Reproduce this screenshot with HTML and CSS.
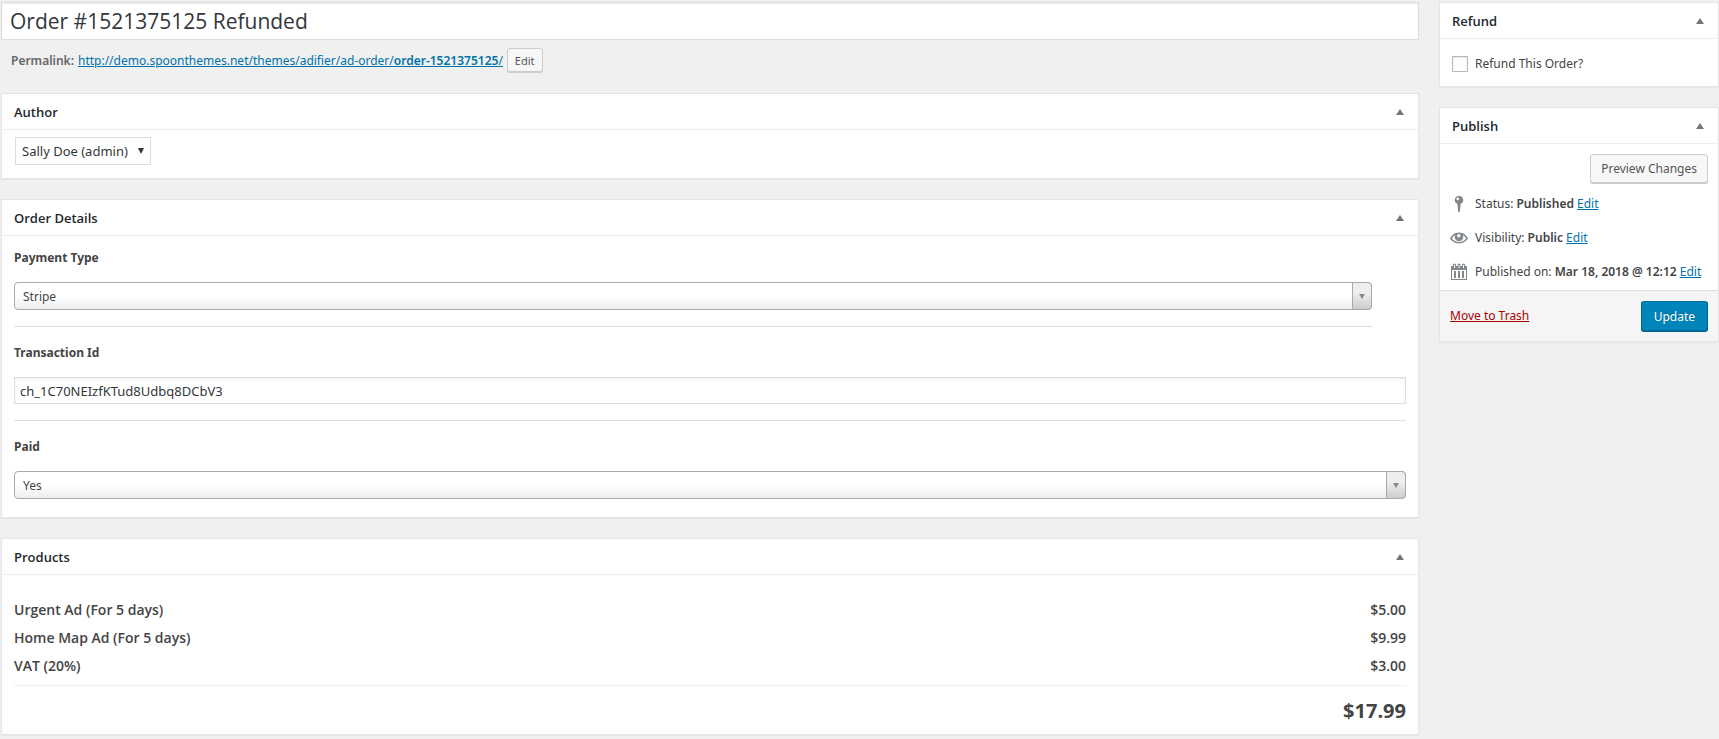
FILE: index.html
```html
<!DOCTYPE html>
<html lang="en">
<head>
    <meta charset="utf-8">
    <title>Edit Order</title>
    <link rel="stylesheet" href="styles.css">
</head>
<body>
    <form class="edit-order">
        <main class="main-column">
            <input type="text" class="order-title" aria-label="Order title" value="Order #1521375125 Refunded">
            <div class="permalink">
                <strong>Permalink:</strong>
                <a href="#">http://demo.spoonthemes.net/themes/adifier/ad-order/<b>order-1521375125</b>/</a>
                <button type="button" class="button button-small">Edit</button>
            </div>

            <!-- Author -->
            <section class="postbox">
                <header class="postbox-header">
                    <h2>Author</h2>
                    <button type="button" class="toggle" aria-label="Toggle Author"><svg viewBox="0 0 8 6"><path d="M4 0l4 6H0z"/></svg></button>
                </header>
                <div class="author-inside">
                    <div class="author-select">
                        <select aria-label="Author">
                            <option>Sally Doe (admin)</option>
                        </select>
                        <svg viewBox="0 0 6 6"><path d="M0 0h6L3 6z"/></svg>
                    </div>
                </div>
            </section>

            <!-- Order details -->
            <section class="postbox">
                <header class="postbox-header">
                    <h2>Order Details</h2>
                    <button type="button" class="toggle" aria-label="Toggle Order Details"><svg viewBox="0 0 8 6"><path d="M4 0l4 6H0z"/></svg></button>
                </header>
                <div class="details-inside">
                    <div class="field field-narrow">
                        <label for="payment-type">Payment Type</label>
                        <div class="chosen">
                            <select id="payment-type">
                                <option>Stripe</option>
                            </select>
                            <span class="chosen-arrow"><svg viewBox="0 0 6 5"><path d="M0 0h6L3 5z"/></svg></span>
                        </div>
                    </div>
                    <div class="field">
                        <label for="transaction-id">Transaction Id</label>
                        <input type="text" id="transaction-id" class="text-input" value="ch_1C70NEIzfKTud8Udbq8DCbV3">
                    </div>
                    <div class="field">
                        <label for="paid">Paid</label>
                        <div class="chosen">
                            <select id="paid">
                                <option>Yes</option>
                            </select>
                            <span class="chosen-arrow"><svg viewBox="0 0 6 5"><path d="M0 0h6L3 5z"/></svg></span>
                        </div>
                    </div>
                </div>
            </section>

            <!-- Products -->
            <section class="postbox">
                <header class="postbox-header">
                    <h2>Products</h2>
                    <button type="button" class="toggle" aria-label="Toggle Products"><svg viewBox="0 0 8 6"><path d="M4 0l4 6H0z"/></svg></button>
                </header>
                <div class="products-inside">
                    <table class="products">
                        <tbody>
                            <tr>
                                <td>Urgent Ad (For 5 days)</td>
                                <td class="price">$5.00</td>
                            </tr>
                            <tr>
                                <td>Home Map Ad (For 5 days)</td>
                                <td class="price">$9.99</td>
                            </tr>
                            <tr>
                                <td>VAT (20%)</td>
                                <td class="price">$3.00</td>
                            </tr>
                        </tbody>
                        <tfoot>
                            <tr>
                                <td colspan="2" class="price total">$17.99</td>
                            </tr>
                        </tfoot>
                    </table>
                </div>
            </section>
        </main>

        <aside class="side-column">
            <!-- Refund -->
            <section class="postbox">
                <header class="postbox-header">
                    <h2>Refund</h2>
                    <button type="button" class="toggle" aria-label="Toggle Refund"><svg viewBox="0 0 8 6"><path d="M4 0l4 6H0z"/></svg></button>
                </header>
                <div class="refund-inside">
                    <input type="checkbox" id="refund">
                    <label for="refund">Refund This Order?</label>
                </div>
            </section>

            <!-- Publish -->
            <section class="postbox">
                <header class="postbox-header">
                    <h2>Publish</h2>
                    <button type="button" class="toggle" aria-label="Toggle Publish"><svg viewBox="0 0 8 6"><path d="M4 0l4 6H0z"/></svg></button>
                </header>
                <div class="preview">
                    <button type="button" class="button">Preview Changes</button>
                </div>
                <ul class="publish-info">
                    <li>
                        <svg viewBox="0 0 18 18"><path fill-rule="evenodd" d="M9 1a4 4 0 0 1 1.700 7.700L9.800 17H8.200L7.300 8.700A4 4 0 0 1 9 1zM7.700 2.600a1.300 1.300 0 1 0 .1 2.600 1.300 1.300 0 0 0-.1-2.600z"/></svg>
                        <span>Status: <b>Published</b> <a href="#">Edit</a></span>
                    </li>
                    <li>
                        <svg viewBox="0 0 18 18"><path fill-rule="evenodd" d="M9 3.500c4.500 0 7.500 3 9 5.800-1.500 2.700-4.500 5.200-9 5.200S1.500 12 0 9.300c1.500-2.800 4.500-5.800 9-5.800zM1.800 9.300c1.500 2.200 4 3.700 7.200 3.700s5.700-1.500 7.200-3.700c-.9-1.500-2-2.600-3.400-3.400A4.300 4.300 0 1 1 5.200 5.900C3.800 6.700 2.700 7.800 1.800 9.300zM8.800 5a1.700 1.700 0 1 0 1.700 1.700A1.700 1.700 0 0 0 8.800 5z"/></svg>
                        <span>Visibility: <b>Public</b> <a href="#">Edit</a></span>
                    </li>
                    <li>
                        <svg viewBox="0 0 18 18"><path fill-rule="evenodd" d="M1 3h2V2a1.500 1.500 0 0 1 3 0v1h1.500V2a1.500 1.500 0 0 1 3 0v1H12V2a1.500 1.500 0 0 1 3 0v1h2v14H1zM4 2v3h1V2zM8.500 2v3h1V2zM13 2v3h1V2zM2 7v9h14V7zM4 8h2v7H4zM8 8h2v7H8zM12 8h2v7h-2z"/></svg>
                        <span>Published on: <b>Mar 18, 2018 @ 12:12</b> <a href="#">Edit</a></span>
                    </li>
                </ul>
                <footer class="publish-actions">
                    <a href="#" class="trash">Move to Trash</a>
                    <button type="submit" class="button button-primary">Update</button>
                </footer>
            </section>
        </aside>
    </form>
</body>
</html>
```
FILE: styles.css
```css
* {
    box-sizing: border-box;
}

body {
    margin: 0;
    background: #f0f0f0;
    color: #444;
    font: 12px/20px "Noto Sans", "Open Sans", sans-serif;
}

a {
    color: #0073aa;
}

b,
strong {
    font-weight: 600;
}

input,
select,
button {
    margin: 0;
    font-family: inherit;
    color: #32373c;
}

.edit-order {
    display: flex;
    align-items: flex-start;
    gap: 20px;
    padding: 2px 0 4px 1px;
}

.main-column {
    flex: 1;
    min-width: 0;
}

.side-column {
    width: 280px;
}

/* title and permalink */
.order-title {
    display: block;
    width: 100%;
    height: 38px;
    padding: 0 8px;
    border: 1px solid #ddd;
    background: #fff;
    box-shadow: inset 0 1px 2px rgba(0, 0, 0, 0.07);
    font-family: "Open Sans", sans-serif;
    font-size: 21px;
}

.permalink {
    display: flex;
    align-items: center;
    gap: 4px;
    margin: 8px 0 20px;
    padding: 0 10px;
    color: #666;
}

/* buttons */
.button {
    height: 29px;
    padding: 0 10px;
    border: 1px solid #ccc;
    border-radius: 3px;
    background: #f7f7f7;
    box-shadow: 0 1px 0 #ccc;
    color: #555;
    font-size: 12px;
}

.button-small {
    height: 24px;
    margin-bottom: 1px;
    padding: 0 7px;
    font-size: 11px;
}

.button-primary {
    height: 30px;
    padding: 0 12px;
    border-color: #0073aa #006799 #006799;
    background: #0085ba;
    box-shadow: 0 1px 0 #006799;
    color: #fff;
    text-shadow: 0 -1px 1px #006799;
}

/* boxes */
.postbox {
    margin-bottom: 20px;
    border: 1px solid #e5e5e5;
    background: #fff;
    box-shadow: 0 1px 1px rgba(0, 0, 0, 0.04);
}

.main-column .postbox:last-child {
    margin-bottom: 0;
}

.postbox-header {
    display: flex;
    align-items: center;
    justify-content: space-between;
    height: 36px;
    padding-left: 12px;
    border-bottom: 1px solid #eee;
}

.postbox-header h2 {
    margin: 0;
    color: #23282d;
    font-family: "Open Sans", sans-serif;
    font-size: 13px;
    font-weight: 600;
}

.toggle {
    display: flex;
    align-items: center;
    justify-content: center;
    width: 36px;
    height: 35px;
    padding: 0;
    border: 0;
    background: none;
}

.toggle svg {
    width: 8px;
    height: 6px;
    fill: #72777c;
}

/* author */
.author-inside {
    display: flex;
    padding: 7px 13px 13px;
}

.author-select,
.chosen {
    display: grid;
    align-items: center;
}

.author-select > *,
.chosen > * {
    grid-area: 1 / 1;
}

.author-select select {
    height: 28px;
    padding: 0 22px 0 6px;
    border: 1px solid #ddd;
    background: #fff;
    appearance: none;
    font-size: 13px;
}

.author-select svg {
    justify-self: end;
    width: 6px;
    height: 6px;
    margin-right: 7px;
    fill: #32373c;
    pointer-events: none;
}

/* order details */
.details-inside {
    padding: 0 12px 2px;
}

.field {
    padding: 16px 0;
    border-bottom: 1px solid #ddd;
}

.field:first-child {
    padding-top: 12px;
}

.field:last-child {
    border-bottom: 0;
}

.field-narrow {
    margin-right: 34px;
}

.field label {
    display: block;
    margin-bottom: 14px;
    font-weight: 700;
}

.text-input {
    display: block;
    width: 100%;
    height: 27px;
    padding: 0 5px;
    border: 1px solid #ddd;
    background: #fff;
    box-shadow: inset 0 1px 2px rgba(0, 0, 0, 0.07);
    font-size: 13px;
}

.chosen select {
    width: 100%;
    height: 28px;
    padding: 0 28px 0 8px;
    border: 1px solid #aaa;
    border-radius: 4px;
    background: linear-gradient(#fff 50%, #eee);
    appearance: none;
    color: #444;
    font-size: 12px;
}

.chosen-arrow {
    display: flex;
    align-items: center;
    justify-content: center;
    justify-self: end;
    width: 20px;
    height: 28px;
    border: 1px solid #aaa;
    border-radius: 0 4px 4px 0;
    background: linear-gradient(#eee 40%, #ccc);
    pointer-events: none;
}

.chosen-arrow svg {
    width: 6px;
    height: 5px;
    fill: #888;
}

/* products */
.products-inside {
    padding: 21px 12px 0;
}

.products {
    width: 100%;
    border-collapse: collapse;
    font-family: "Open Sans", sans-serif;
    font-size: 14px;
    font-weight: 600;
}

.products td {
    height: 28px;
    padding: 0;
}

.products .price {
    text-align: right;
}

.products tbody tr:last-child td {
    height: 33px;
    padding-bottom: 5px;
}

.products .total {
    height: 49px;
    padding-top: 2px;
    border-top: 1px solid #eee;
    font-size: 20px;
    font-weight: 700;
}

/* refund */
.refund-inside {
    display: flex;
    align-items: center;
    gap: 7px;
    padding: 15px 12px 12px;
}

.refund-inside input {
    width: 16px;
    height: 16px;
    border: 1px solid #b4b9be;
    background: #fff;
    box-shadow: inset 0 1px 2px rgba(0, 0, 0, 0.1);
    appearance: none;
}

/* publish */
.preview {
    display: flex;
    justify-content: flex-end;
    padding: 10px 10px 4px;
}

.publish-info {
    margin: 0;
    padding: 0 0 1px 10px;
    list-style: none;
}

.publish-info li {
    display: flex;
    align-items: center;
    gap: 7px;
    height: 34px;
    white-space: nowrap;
}

.publish-info svg {
    flex: none;
    width: 18px;
    height: 18px;
    fill: #82878c;
}

.publish-actions {
    display: flex;
    align-items: center;
    justify-content: space-between;
    padding: 10px;
    border-top: 1px solid #ddd;
    background: #f5f5f5;
}

.trash {
    color: #a00;
}
```
